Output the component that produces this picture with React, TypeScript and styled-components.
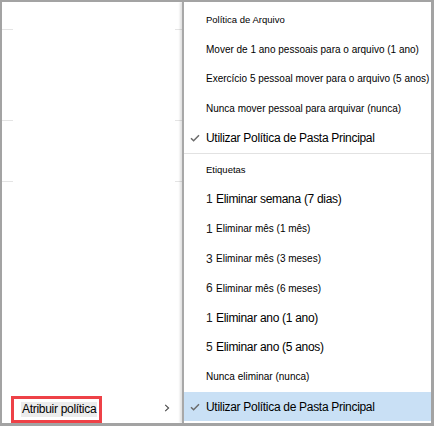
import styled, { createGlobalStyle } from "styled-components";

const GlobalStyle = createGlobalStyle`
  html, body {
    margin: 0;
    padding: 0;
    background: #ffffff;
  }

  body {
    font-family: "Liberation Sans", Arial, sans-serif;
    color: #000000;
  }
`;

type LabelSize = "head" | "sm" | "lg";

const archiveItems = [
  "Mover de 1 ano pessoais para o arquivo (1 ano)",
  "Exercício 5 pessoal mover para o arquivo (5 anos)",
  "Nunca mover pessoal para arquivar (nunca)",
];

const tagItems: { digit?: string; text: string; size: LabelSize }[] = [
  { digit: "1", text: "Eliminar semana (7 dias)", size: "lg" },
  { digit: "1", text: "Eliminar mês (1 mês)", size: "sm" },
  { digit: "3", text: "Eliminar mês (3 meses)", size: "sm" },
  { digit: "6", text: "Eliminar mês (6 meses)", size: "sm" },
  { digit: "1", text: "Eliminar ano (1 ano)", size: "lg" },
  { digit: "5", text: "Eliminar ano (5 anos)", size: "lg" },
  { text: "Nunca eliminar (nunca)", size: "sm" },
];

const CheckIcon = () => (
  <svg width="10" height="8" viewBox="0 0 10 8" aria-hidden="true">
    <polyline
      points="1,4.2 3.6,6.8 9,1.2"
      fill="none"
      stroke="#6b6b6b"
      strokeWidth="1.5"
    />
  </svg>
);

const ChevronIcon = () => (
  <svg width="6" height="8" viewBox="0 0 6 8" aria-hidden="true">
    <polyline
      points="1.2,0.8 4.6,4 1.2,7.2"
      fill="none"
      stroke="#4a4a4a"
      strokeWidth="1.1"
    />
  </svg>
);

export default function App() {
  return (
    <>
      <GlobalStyle />
      <Frame>
        <ParentMenu>
          <BlankItem $height={27} />
          <ParentSeparator />
          <BlankItem $height={90} />
          <ParentSeparator />
          <BlankItem $height={60} />
          <ParentSeparator />
          <Filler />
          <ParentItem>
            <Callout>
              <CalloutText>Atribuir política</CalloutText>
            </Callout>
            <ChevronIcon />
          </ParentItem>
        </ParentMenu>

        <SubMenu>
          <Section>
            <Row>
              <Label $size="head">Política de Arquivo</Label>
            </Row>
            {archiveItems.map((item) => (
              <Row key={item}>
                <Label $size="sm">{item}</Label>
              </Row>
            ))}
            <Row>
              <CheckSlot>
                <CheckIcon />
              </CheckSlot>
              <Label $size="lg">Utilizar Política de Pasta Principal</Label>
            </Row>
          </Section>

          <MenuSeparator />

          <Section>
            <Row>
              <Label $size="head">Etiquetas</Label>
            </Row>
            {tagItems.map((item) => (
              <Row key={item.text}>
                {item.digit && <Digit>{item.digit}</Digit>}
                <Label $size={item.size}>{item.text}</Label>
              </Row>
            ))}
            <Row $selected>
              <CheckSlot>
                <CheckIcon />
              </CheckSlot>
              <Label $size="lg">Utilizar Política de Pasta Principal</Label>
            </Row>
          </Section>
        </SubMenu>
      </Frame>
    </>
  );
}

const Frame = styled.div`
  box-sizing: border-box;
  width: 434px;
  height: 426px;
  display: flex;
  border-style: solid;
  border-color: #a3a3a3;
  border-width: 2px 3px 3px 2px;
  background: #ffffff;
  overflow: hidden;
`;

const ParentMenu = styled.div`
  flex: 0 0 180px;
  display: flex;
  flex-direction: column;
`;

const BlankItem = styled.div<{ $height: number }>`
  height: ${(p) => p.$height}px;
  flex-shrink: 0;
`;

// the parent menu's separators only peek out at both edges
const ParentSeparator = styled.div`
  height: 1px;
  flex-shrink: 0;
  display: flex;
  justify-content: space-between;

  &::before,
  &::after {
    content: "";
    height: 1px;
    background: #e4e4e4;
  }

  &::before {
    width: 11px;
  }

  &::after {
    width: 7px;
  }
`;

const Filler = styled.div`
  flex: 1;
`;

const ParentItem = styled.div`
  height: 30px;
  flex-shrink: 0;
  display: flex;
  align-items: center;
  justify-content: space-between;
  padding: 0 12px 0 9px;
`;

const Callout = styled.div`
  box-sizing: border-box;
  height: 27px;
  width: 91px;
  margin-top: 2px;
  display: flex;
  align-items: center;
  padding-left: 7px;
  border: 3px solid #ee4147;
`;

const CalloutText = styled.span`
  font-size: 12px;
  letter-spacing: -0.3px;
  line-height: 15px;
  padding: 0 1px;
  background: #ececec;
  color: #000000;
`;

const SubMenu = styled.div`
  flex: 1;
  display: flex;
  flex-direction: column;
  padding-top: 3px;
  border-left: 2px solid #a8a8a8;
  box-shadow: -2px 0 2px rgba(0, 0, 0, 0.12);
  background: #ffffff;
`;

const Section = styled.div`
  display: flex;
  flex-direction: column;
`;

const MenuSeparator = styled.div`
  height: 1px;
  margin-bottom: 1px;
  background: #e2e2e2;
`;

const Row = styled.div<{ $selected?: boolean }>`
  position: relative;
  height: 29.6px;
  flex-shrink: 0;
  display: flex;
  align-items: center;
  padding-left: 22px;
  background: ${(p) => (p.$selected ? "#c9e0f5" : "transparent")};
  white-space: nowrap;
`;

const CheckSlot = styled.span`
  position: absolute;
  left: 6px;
  top: 50%;
  transform: translateY(-50%);
  display: flex;
`;

const labelSizes: Record<LabelSize, string> = {
  head: "font-size: 9.5px;",
  sm: "font-size: 10px;",
  lg: "font-size: 12px; letter-spacing: -0.3px;",
};

const Label = styled.span<{ $size: LabelSize }>`
  ${(p) => labelSizes[p.$size]}
  color: #000000;
`;

const Digit = styled.span`
  font-size: 12px;
  margin-right: 3.3px;
  color: #1a1a1a;
`;
